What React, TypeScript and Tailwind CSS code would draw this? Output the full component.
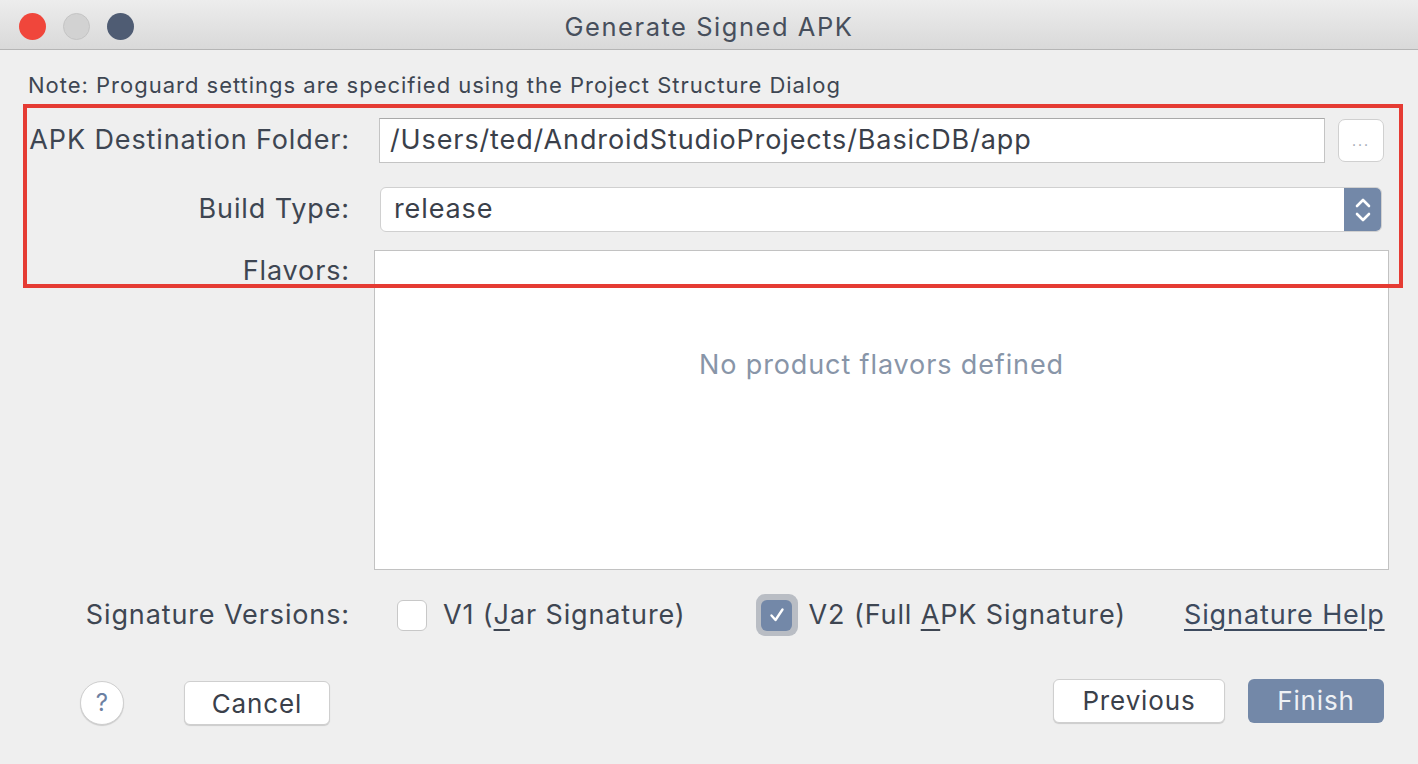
import React from 'react'

const font = { fontFamily: 'Inter, "Noto Sans", sans-serif' }

function Label({ children, className = '' }: { children: React.ReactNode; className?: string }) {
  return (
    <div className={`w-[350px] shrink-0 text-right text-[27px] text-[#3e4652] whitespace-nowrap ${className}`}>{children}</div>
  )
}

function Chevrons() {
  return (
    <svg width="20" height="30" viewBox="0 0 20 30" fill="none" stroke="white" strokeWidth="2.6" strokeLinecap="round" strokeLinejoin="round">
      <path d="M4 11 L10 5 L16 11" />
      <path d="M4 19 L10 25 L16 19" />
    </svg>
  )
}

export default function App() {
  return (
    <div className="relative w-[1418px] h-[764px] overflow-hidden bg-[#efefef] tracking-[0.055em]" style={font}>
      {/* title bar */}
      <div className="relative h-[50px] bg-gradient-to-b from-[#ededed] to-[#d9d9d9] border-b border-[#b5b5b5] flex items-center pt-[4px]">
        <div className="flex items-center gap-[17px] pl-[19px]">
          <span className="w-[27px] h-[27px] rounded-full bg-[#f0463b]" />
          <span className="w-[27px] h-[27px] rounded-full bg-[#d2d2d2] border border-[#c4c4c4]" />
          <span className="w-[27px] h-[27px] rounded-full bg-[#4f5c73]" />
        </div>
        <div className="absolute inset-0 flex items-center justify-center pt-[5px] text-[25.5px] tracking-[0.06em] text-[#474f5c]">
          Generate Signed APK
        </div>
      </div>

      {/* note */}
      <div className="mt-[17px] h-[36px] flex items-center pl-[28px] text-[22px] tracking-[0.045em] text-[#3e4652] whitespace-nowrap">
        Note: Proguard settings are specified using the Project Structure Dialog
      </div>

      {/* destination */}
      <div className="mt-[14px] flex items-center h-[46px]">
        <Label className="pl-[28px] text-left">APK Destination Folder:</Label>
        <div className="ml-[29px] w-[946px] h-[45px] bg-white border border-[#c4c4c4] border-t-[#a9a9a9] flex items-center pl-[10px] text-[27px] text-[#3a404a] whitespace-nowrap">
          /Users/ted/AndroidStudioProjects/BasicDB/app
        </div>
        <div className="ml-[13px] w-[46px] h-[43px] bg-white border border-[#d0d0d0] rounded-[7px] flex items-end justify-center pb-[10px] text-[14px] tracking-[2px] text-[#9aa2ae]">
          ...
        </div>
      </div>

      {/* build type */}
      <div className="mt-[24px] flex items-center h-[45px]">
        <Label>Build Type:</Label>
        <div className="ml-[30px] w-[1002px] h-[45px] bg-white border border-[#d0d0d0] rounded-[6px] flex items-center overflow-hidden">
          <div className="flex-1 pl-[13px] text-[27px] text-[#3a404a]">release</div>
          <div className="w-[37px] h-full bg-[#7388a8] flex items-center justify-center">
            <Chevrons />
          </div>
        </div>
      </div>

      {/* flavors */}
      <div className="mt-[18px] flex items-start">
        <Label className="pt-[1px]">Flavors:</Label>
        <div className="ml-[24px] w-[1015px] h-[320px] bg-white border border-[#c2c2c2] flex items-center justify-center pb-[90px] text-[27px] text-[#8895a8] whitespace-nowrap">
          No product flavors defined
        </div>
      </div>

      {/* signature versions */}
      <div className="mt-[28px] flex items-center h-[34px] whitespace-nowrap">
        <Label>Signature Versions:</Label>
        <div className="ml-[47px] w-[30px] h-[31px] bg-white border border-[#c8c8c8] rounded-[6px]" />
        <div className="ml-[16px] text-[27px] text-[#3e4652]">
          V1 (<span className="underline underline-offset-[5px]">J</span>ar Signature)
        </div>
        <div className="ml-[70px] w-[42px] h-[42px] rounded-[9px] bg-[#b9bdc4] flex items-center justify-center">
          <div className="w-[31px] h-[31px] rounded-[6px] bg-[#7388a8] flex items-center justify-center">
            <svg width="18" height="18" viewBox="0 0 18 18" fill="none" stroke="white" strokeWidth="2.4" strokeLinecap="round" strokeLinejoin="round">
              <path d="M3.5 9.5 L7.5 14 L14.5 3.5" />
            </svg>
          </div>
        </div>
        <div className="ml-[11px] text-[27px] text-[#3e4652]">
          V2 (Full <span className="underline underline-offset-[5px]">A</span>PK Signature)
        </div>
        <div className="ml-[58px] text-[27px] text-[#3d4a5e] underline underline-offset-[5px]">Signature Help</div>
      </div>

      {/* buttons */}
      <div className="mt-[49px] flex items-center">
        <div className="ml-[80px] w-[44px] h-[44px] rounded-full bg-white border border-[#cfcfcf] shadow-[0_1px_1px_rgba(0,0,0,0.15)] flex items-center justify-center text-[24px] tracking-normal text-[#6c80a2]">
          ?
        </div>
        <div className="ml-[60px] w-[146px] h-[44px] rounded-[6px] bg-white border border-[#cfcfcf] shadow-[0_1px_1px_rgba(0,0,0,0.15)] flex items-center justify-center text-[26px] text-[#3a404a]">
          Cancel
        </div>
        <div className="ml-[723px] -mt-[5px] w-[172px] h-[44px] rounded-[6px] bg-white border border-[#cfcfcf] shadow-[0_1px_1px_rgba(0,0,0,0.15)] flex items-center justify-center text-[26px] text-[#3a404a]">
          Previous
        </div>
        <div className="ml-[23px] -mt-[5px] w-[136px] h-[44px] rounded-[6px] bg-[#7388a8] flex items-center justify-center text-[26px] text-[#eef1f5]">
          Finish
        </div>
      </div>

      {/* red annotation box */}
      <div className="absolute left-[23px] top-[104px] w-[1380px] h-[184px] border-[4px] border-[#e53b33] pointer-events-none" />
    </div>
  )
}
